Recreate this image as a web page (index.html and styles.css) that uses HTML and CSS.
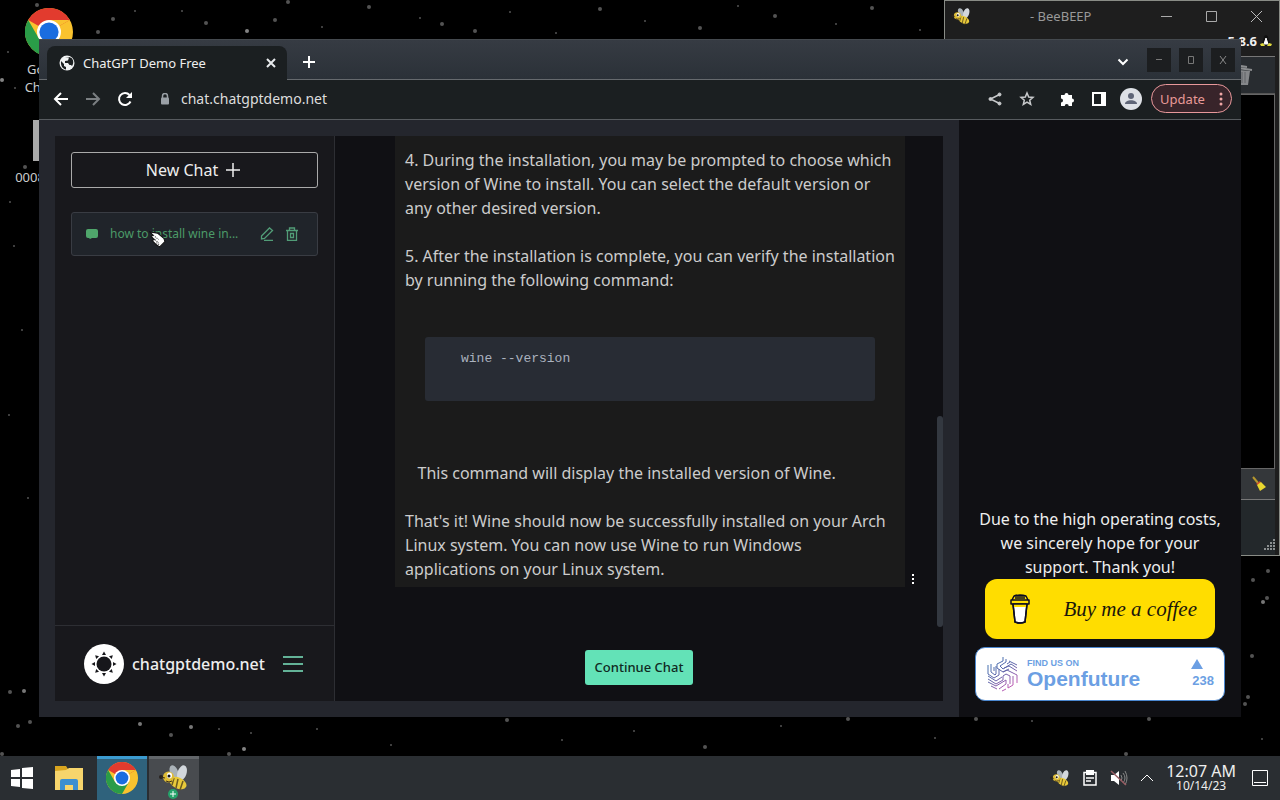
FILE: index.html
```html
<!DOCTYPE html>
<html lang="en">
<head>
    <meta charset="UTF-8">
    <meta name="viewport" content="width=device-width, initial-scale=1.0">
    <title>ChatGPT Demo Free</title>
    <link rel="stylesheet" href="styles.css">
</head>
<body>
    <!-- shared icons -->
    <svg class="defs" width="0" height="0">
        <symbol id="chrome" viewBox="0 0 48 48">
            <circle cx="24" cy="24" r="24" fill="#f9c22e"/>
            <path d="M24 24 L3.2 12 A24 24 0 0 1 44.8 12 Z" fill="#e23b2e"/>
            <path d="M24 12 H44.8 L24 24 Z" fill="#f9c22e"/>
            <path d="M3.2 12 L13.6 30 L24 35 L34.4 30 L24 48 A24 24 0 0 1 3.2 12Z" fill="#2a9c48"/>
            <circle cx="24" cy="24" r="12" fill="#fff"/>
            <circle cx="24" cy="24" r="9.6" fill="#1a6de0"/>
        </symbol>
        <symbol id="bee" viewBox="0 0 30 26">
            <ellipse cx="15" cy="7" rx="4" ry="7" fill="#aab2b8" transform="rotate(-22 15 7)"/>
            <ellipse cx="23" cy="8" rx="4.5" ry="8" fill="#d2d7dc" transform="rotate(18 23 8)"/>
            <ellipse cx="19" cy="18" rx="9" ry="5.5" fill="#e8c93a" transform="rotate(25 19 18)"/>
            <path d="M15 13l-2 7M19 14l-2 9M24 16l-3 9" stroke="#6b5a20" stroke-width="1.500"/>
            <circle cx="9.500" cy="12" r="5.500" fill="#dfbd35"/>
            <ellipse cx="10.500" cy="10.500" rx="2.500" ry="3" fill="#fff"/>
            <circle cx="10" cy="11" r="1.500" fill="#171717"/>
            <circle cx="2" cy="12" r="2" fill="#28231e"/>
            <path d="M2 12l4 1M7 16q3 2 6 0" stroke="#3b2d19" fill="none"/>
        </symbol>
    </svg>

    <main class="desktop">
        <svg class="stars" width="100%" height="100%" fill="#777">
            <circle cx="37" cy="5" r="2"/><circle cx="113" cy="19" r="2"/><circle cx="98" cy="32" r="2"/>
            <circle cx="135" cy="11" r="1"/><circle cx="182" cy="11" r="1"/><circle cx="206" cy="23" r="2"/>
            <circle cx="247" cy="31" r="2" fill="#bbb"/><circle cx="275" cy="20" r="2"/><circle cx="288" cy="2" r="2"/>
            <circle cx="369" cy="7" r="2"/><circle cx="322" cy="27" r="1"/><circle cx="420" cy="18" r="1"/>
            <circle cx="442" cy="24" r="2"/><circle cx="475" cy="31" r="2"/><circle cx="510" cy="12" r="1"/>
            <circle cx="556" cy="33" r="1"/><circle cx="600" cy="9" r="2"/><circle cx="645" cy="21" r="1"/>
            <circle cx="700" cy="28" r="2"/><circle cx="738" cy="6" r="1"/><circle cx="775" cy="16" r="2"/>
            <circle cx="836" cy="24" r="1"/><circle cx="872" cy="8" r="2"/><circle cx="920" cy="30" r="1"/>
            <circle cx="2" cy="80" r="2" fill="#bbb"/><circle cx="8" cy="52" r="1"/><circle cx="15" cy="88" r="1"/>
            <circle cx="25" cy="167" r="2"/><circle cx="10" cy="202" r="1"/><circle cx="14" cy="246" r="1"/>
            <circle cx="22" cy="330" r="1"/><circle cx="9" cy="415" r="1"/><circle cx="28" cy="498" r="1"/>
            <circle cx="10" cy="692" r="2"/><circle cx="24" cy="691" r="2" fill="#aaa"/><circle cx="30" cy="722" r="2"/>
            <circle cx="18" cy="726" r="2"/><circle cx="2" cy="754" r="2"/><circle cx="140" cy="724" r="2" fill="#aaa"/>
            <circle cx="171" cy="735" r="2"/><circle cx="191" cy="727" r="2" fill="#aaa"/><circle cx="219" cy="729" r="1"/>
            <circle cx="244" cy="749" r="2" fill="#bbb"/><circle cx="229" cy="754" r="2"/><circle cx="251" cy="733" r="1"/>
            <circle cx="317" cy="729" r="1"/><circle cx="391" cy="745" r="1"/><circle cx="507" cy="720" r="2"/>
            <circle cx="562" cy="740" r="1"/><circle cx="634" cy="731" r="1"/><circle cx="705" cy="747" r="2"/>
            <circle cx="781" cy="726" r="1"/><circle cx="848" cy="719" r="2"/><circle cx="935" cy="738" r="1"/>
            <circle cx="976" cy="719" r="2"/><circle cx="1032" cy="721" r="1"/><circle cx="1149" cy="719" r="2"/>
            <circle cx="1126" cy="754" r="2"/><circle cx="1253" cy="580" r="2"/><circle cx="1268" cy="571" r="2"/>
            <circle cx="1263" cy="602" r="2" fill="#aaa"/><circle cx="1267" cy="598" r="2"/><circle cx="1252" cy="656" r="2"/>
            <circle cx="1248" cy="697" r="2"/><circle cx="1245" cy="704" r="2"/><circle cx="1262" cy="739" r="1"/>
        </svg>

        <a href="#" class="shortcut shortcut-chrome">
            <svg width="48" height="48"><use href="#chrome"/></svg>
            <span>Google<br>Chrome</span>
        </a>
        <a href="#" class="shortcut shortcut-file">
            <span class="thumb"></span>
            <span>0008</span>
        </a>

        <!-- BeeBEEP window, behind the browser -->
        <section class="beebeep">
            <header class="bee-title">
                <svg width="20" height="17"><use href="#bee"/></svg>
                <span class="bee-name">- BeeBEEP</span>
                <button aria-label="Minimize"><svg width="13" height="13" stroke="#aaa"><path d="M1 6.500h11"/></svg></button>
                <button aria-label="Maximize"><svg width="13" height="13" fill="none" stroke="#aaa"><path d="M1.500 1.500h10v10h-10z"/></svg></button>
                <button aria-label="Close"><svg width="13" height="13" stroke="#bbb"><path d="M1 1l11 11M12 1L1 12"/></svg></button>
            </header>
            <div class="bee-version">
                <strong>5.8.6</strong>
                <svg width="12" height="12" viewBox="0 0 12 12">
                    <path d="M6 0c-3 1-2 4-4 8l1 3h6l1-3C8 4 9 1 6 0z" fill="#111"/>
                    <path d="M6 3l-2 6h4z" fill="#fff" stroke="#fff"/>
                    <path d="M0 9l3-1 2 3H1zM12 9L9 8l-2 3h4z" fill="#dfd93c"/>
                </svg>
            </div>
            <div class="bee-tools">
                <svg width="16" height="22" viewBox="0 0 16 22">
                    <path d="M1 4l14 2M4 2l6 1" stroke="#8b8d8f" stroke-width="2"/>
                    <path d="M2 6l11 1-2 14H3z" fill="#85878a"/>
                    <path d="M5 8v11M8 8v11" stroke="#606366"/>
                </svg>
            </div>
            <div class="bee-body"></div>
            <div class="bee-clean">
                <svg width="16" height="16" viewBox="0 0 16 16">
                    <path d="M2 1l5 6" stroke="#b5972e" stroke-width="2"/>
                    <path d="M5 8l4-3 1 2-3 2z" fill="#d44a2b"/>
                    <path d="M6 9l4-3 5 5c-2 1-4 3-6 4z" fill="#e9d72f"/>
                </svg>
            </div>
            <div class="bee-input">
                <svg width="12" height="12" fill="#8b8f90">
                    <path d="M10 0h2v2h-2zM7 3h2v2H7zM10 3h2v2h-2zM4 6h2v2H4zM7 6h2v2H7zM10 6h2v2h-2zM1 9h2v2H1zM4 9h2v2H4zM7 9h2v2H7zM10 9h2v2h-2z"/>
                </svg>
            </div>
        </section>

        <!-- browser window -->
        <section class="browser">
            <div class="tabstrip">
                <div class="tab">
                    <svg width="16" height="16" viewBox="0 0 16 16">
                        <circle cx="8" cy="8" r="7.500" fill="#f1f3f4"/>
                        <path d="M2 6l3 3v2l2 1v2.500C3.500 14 1.500 10.500 2 6zM6 2.500h4l-1 3-3 .5v2H9l1.500 2H12l1 1c2-3 1.500-6-.5-8L10 2z" fill="#1b1f21"/>
                    </svg>
                    <span class="tab-title">ChatGPT Demo Free</span>
                    <button aria-label="Close tab"><svg width="10" height="10" stroke="#e8eaed" stroke-width="2"><path d="M1 1l8 8M9 1L1 9"/></svg></button>
                </div>
                <button class="new-tab" aria-label="New tab"><svg width="12" height="12" stroke="#fff" stroke-width="2"><path d="M6 0v12M0 6h12"/></svg></button>
                <button class="tab-search" aria-label="Search tabs"><svg width="12" height="8" fill="none" stroke="#fff" stroke-width="2"><path d="M1.500 1.500L6 6l4.500-4.500"/></svg></button>
                <div class="win-buttons">
                    <button aria-label="Minimize"><svg width="8" height="12" stroke="#777"><path d="M1 5.500h6"/></svg></button>
                    <button aria-label="Maximize"><svg width="8" height="12" fill="none" stroke="#777"><path d="M1.500 2.500h5v7h-5z"/></svg></button>
                    <button aria-label="Close"><svg width="8" height="12" stroke="#888"><path d="M1 2l6 8M7 2l-6 8"/></svg></button>
                </div>
            </div>

            <div class="toolbar">
                <button class="tool" aria-label="Back"><svg width="16" height="16" fill="none" stroke="#fff" stroke-width="2"><path d="M15 8H2M8 2L2 8l6 6"/></svg></button>
                <button class="tool" aria-label="Forward"><svg width="16" height="16" fill="none" stroke="#7b7f82" stroke-width="2"><path d="M1 8h13M8 2l6 6-6 6"/></svg></button>
                <button class="tool" aria-label="Reload"><svg width="16" height="16" viewBox="0 0 16 16"><path d="M13.500 10.500A6 6 0 1 1 12.500 4" fill="none" stroke="#fff" stroke-width="2"/><path d="M15 1v6H9z" fill="#fff"/></svg></button>
                <svg class="lock" width="10" height="12" viewBox="0 0 10 12"><path d="M2.500 5V3a2.500 2.500 0 0 1 5 0v2" fill="none" stroke="#9aa0a6" stroke-width="1.500"/><rect x="1" y="4.500" width="8" height="7" rx="1" fill="#9aa0a6"/></svg>
                <input class="address" type="text" aria-label="Address" value="chat.chatgptdemo.net">
                <button class="tool" aria-label="Share"><svg width="14" height="14" viewBox="0 0 14 14" fill="#c8cacc" stroke="#c8cacc"><path d="M11.500 2.500L2.500 7l9 4.500" fill="none" stroke-width="1.500"/><circle cx="11.500" cy="2.500" r="1.500"/><circle cx="2.500" cy="7" r="1.500"/><circle cx="11.500" cy="11.500" r="1.500"/></svg></button>
                <button class="tool" aria-label="Bookmark"><svg width="16" height="16" viewBox="0 0 16 16" fill="none" stroke="#c8cacc" stroke-width="1.500"><path d="M8 2l1.700 4 4.300.400-3.300 2.800 1 4.300L8 11.200l-3.700 2.300 1-4.300L2 6.400 6.300 6z"/></svg></button>
                <button class="tool tool-ext" aria-label="Extensions"><svg width="16" height="16" viewBox="0 0 16 16" fill="#fff"><path d="M2 4h3.500a2 2 0 1 1 4 0H13v3.500a2 2 0 1 1 0 4V15H9.700a2 2 0 0 0-4 0H2v-3.500a2 2 0 0 0 0-4z"/></svg></button>
                <button class="tool" aria-label="Side panel"><svg width="14" height="14"><path d="M0 0h14v14H0z" fill="#fff"/><path d="M2 2h7v10H2z" fill="#1b1f21"/></svg></button>
                <button class="tool" aria-label="Profile"><svg width="22" height="22" viewBox="0 0 22 22"><circle cx="11" cy="11" r="11" fill="#dee1e6"/><circle cx="11" cy="8" r="3" fill="#5f6577"/><path d="M5 16c0-5 12-5 12 0z" fill="#5f6577"/></svg></button>
                <button class="update">Update <svg width="4" height="14" fill="#f0a6a5"><circle cx="2" cy="2" r="1.500"/><circle cx="2" cy="7" r="1.500"/><circle cx="2" cy="12" r="1.500"/></svg></button>
            </div>

            <div class="page">
                <div class="app">
                    <aside class="sidebar">
                        <button class="new-chat">New Chat <svg width="14" height="14" stroke="#eee" stroke-width="1.500"><path d="M7 0v14M0 7h14"/></svg></button>
                        <div class="history">
                            <svg width="14" height="12" viewBox="0 0 14 12" fill="#4fa66b"><path d="M3 1h8q2 0 2 2v5q0 2-2 2H7l-2 1-1-1H3q-2 0-2-2V3q0-2 2-2z"/></svg>
                            <a href="#" class="history-link">how to install wine in...</a>
                            <button aria-label="Rename"><svg width="14" height="14" viewBox="0 0 14 14" fill="none" stroke="#519c77" stroke-width="1.300"><path d="M1.500 9L9.500 1l3 2.500-8 8-3 .5zM4 13.500h9"/></svg></button>
                            <button aria-label="Delete"><svg width="14" height="14" viewBox="0 0 14 14" fill="none" stroke="#519c77" stroke-width="1.300"><path d="M1 3.500h12M4.500 3V1h5v2M2.500 4v9.300h9V4M5.500 6.500h3v4h-3z"/></svg></button>
                            <svg class="cursor" width="17" height="17" viewBox="0 0 16 16"><path d="M1 1l7 1 6 5 1 3-5 5-3-2-4-4 2-1-3-3 2-1z" fill="#fff" stroke="#111"/><path d="M4 4l5 4M4 7l5 4M7 11l3 2" stroke="#333" stroke-dasharray="1 1"/></svg>
                        </div>
                        <footer class="account">
                            <svg width="40" height="40" viewBox="0 0 40 40">
                                <circle cx="20" cy="20" r="20" fill="#fff"/>
                                <circle cx="20" cy="20" r="7.500" fill="#17171b"/>
                                <path id="ray" d="M18 11l2-3.500 2 3.500z" fill="#17171b"/>
                                <use href="#ray" transform="rotate(45 20 20)"/><use href="#ray" transform="rotate(90 20 20)"/>
                                <use href="#ray" transform="rotate(135 20 20)"/><use href="#ray" transform="rotate(180 20 20)"/>
                                <use href="#ray" transform="rotate(225 20 20)"/><use href="#ray" transform="rotate(270 20 20)"/>
                                <use href="#ray" transform="rotate(315 20 20)"/>
                            </svg>
                            <span>chatgptdemo.net</span>
                            <button aria-label="Menu"><svg width="20" height="16" stroke="#63b297" stroke-width="2"><path d="M0 1h20M0 8h20M0 15h20"/></svg></button>
                        </footer>
                    </aside>

                    <div class="chat">
                        <div class="message-row">
                            <article class="message">
                                <p>4. During the installation, you may be prompted to choose which version of Wine to install. You can select the default version or any other desired version.</p>
                                <p>5. After the installation is complete, you can verify the installation by running the following command:</p>
                                <pre><code>wine --version</code></pre>
                                <p>&nbsp;&nbsp;&nbsp;This command will display the installed version of Wine.</p>
                                <p>That's it! Wine should now be successfully installed on your Arch Linux system. You can now use Wine to run Windows applications on your Linux system.</p>
                            </article>
                            <button class="message-menu" aria-label="Message menu"><svg width="4" height="12" fill="#fff"><path d="M1 1h2v2H1zM1 5h2v2H1zM1 9h2v2H1z"/></svg></button>
                        </div>
                        <button class="continue">Continue Chat</button>
                        <div class="scroll-thumb"></div>
                    </div>
                </div>

                <aside class="support">
                    <p>Due to the high operating costs, we sincerely hope for your support. Thank you!</p>
                    <a href="#" class="coffee">
                        <svg width="22" height="30" viewBox="0 0 22 30" stroke="#0d0c22" stroke-width="1.500" stroke-linejoin="round">
                            <path d="M4 10l2 18q5 2 10 0l2-18z" fill="#fff"/>
                            <path d="M4 10h14l-.3 3H4.300z" fill="#ffdd00" stroke="none"/>
                            <path d="M4 10l2 18q5 2 10 0l2-18M2 6h18v4H2zM3 6l2-4h12l2 4M5 2q6-2 12 0M6 4h10" fill="none"/>
                        </svg>
                        <span>Buy me a coffee</span>
                    </a>
                    <a href="#" class="openfuture">
                        <svg width="34" height="36" viewBox="0 0 34 36" fill="none" stroke="url(#of)">
                            <defs>
                                <linearGradient id="of" gradientUnits="userSpaceOnUse" x1="4" y1="2" x2="28" y2="34">
                                    <stop offset="0" stop-color="#3c78b4"/><stop offset=".5" stop-color="#6263a8"/><stop offset="1" stop-color="#d95bb8"/>
                                </linearGradient>
                            </defs>
                            <path d="M17 1v4l-6 3v4l6 4 6-3M20 3v3l-6 4 3 3 8-5 6 4M23 5l8 4M21 8l3-2M2 9v9l6 4 5-3v-6M5 8v8l4 3 1-1v-8M8 11v4M2 20l8 5 6-4M2 23l8 5 7-4v-4l3-2 4 2v8M2 26l8 4 10-6v4l-7 5M5 30l6 3M17 16l4-2 10 5v8M18 12l5-2 8 5M27 20v9l-5 3v-4M16 35l4-2"/>
                        </svg>
                        <span class="of-text"><small>FIND US ON</small><strong>Openfuture</strong></span>
                        <span class="of-votes"><svg width="12" height="10" fill="#6c9fe3"><path d="M6 0l6 10H0z"/></svg>238</span>
                    </a>
                </aside>
            </div>
        </section>
    </main>

    <footer class="taskbar">
        <button class="task" aria-label="Start"><svg width="22" height="22" fill="#fff"><path d="M0 3l9-1v8H0zM11 1l11-1v10H11zM0 12h9v8l-9-1zM11 12h11v10l-11-1z"/></svg></button>
        <button class="task" aria-label="Files"><svg width="28" height="24" viewBox="0 0 28 24"><path d="M0 0h11l2 3v6H0z" fill="#d9a51f"/><path d="M0 5l11-1 3-2h14v22H0z" fill="#f7d56c"/><path d="M5 24V15q0-2 2-2h14q2 0 2 2v9h-5v-5h-8v5z" fill="#3c8fd0"/></svg></button>
        <button class="task task-active" aria-label="Chrome"><svg width="32" height="32"><use href="#chrome"/></svg></button>
        <button class="task task-open" aria-label="BeeBEEP"><svg width="30" height="26"><use href="#bee"/></svg>
            <svg class="badge" width="10" height="10" stroke="#fff"><circle cx="5" cy="5" r="5" fill="#25a36a" stroke="none"/><path d="M5 2v6M2 5h6"/></svg></button>
        <div class="tray">
            <svg width="20" height="17"><use href="#bee"/></svg>
            <svg width="14" height="16" viewBox="0 0 14 16" fill="none" stroke="#fff" stroke-width="1.500"><path d="M1 2.500h12v12.500H1zM3 8h8M3 11h5"/><path d="M3 0h8v5H3z" fill="#fff" stroke="none"/></svg>
            <svg width="18" height="16" viewBox="0 0 18 16" fill="none"><path d="M1 5h3l5-4v14l-5-4H1z" fill="#fff"/><path d="M11 5q2 3 0 6M13 3q4 5 0 10M15 1q4 7 0 14" stroke="#888"/><path d="M1 1l15 14" stroke="#985c62" stroke-width="1.500"/></svg>
            <svg width="12" height="8" fill="none" stroke="#fff"><path d="M0 7l6-6 6 6"/></svg>
            <div class="clock"><span>12:07 AM</span><small>10/14/23</small></div>
            <svg width="16" height="16" fill="none" stroke="#fff"><path d="M.5.5h15v15H.5zM2 12.500h12"/></svg>
        </div>
    </footer>
</body>
</html>
```
FILE: styles.css
```css
* {
    box-sizing: border-box;
}
body {
    margin: 0;
    height: 100vh;
    display: flex;
    flex-direction: column;
    background-color: #000;
    color: #eee;
    font-family: "Noto Sans", sans-serif;
    font-size: 13px;
    overflow: hidden;
}
button {
    display: flex;
    align-items: center;
    justify-content: center;
    padding: 0;
    border: none;
    background: none;
    color: inherit;
    font: inherit;
    cursor: pointer;
}
a {
    color: inherit;
    text-decoration: none;
}
p {
    margin: 0;
}
svg {
    display: block;
    flex-shrink: 0;
}
.defs {
    position: absolute;
}

/* desktop */
.desktop {
    flex: 1;
    position: relative;
    overflow: hidden;
}
.stars {
    position: absolute;
    inset: 0;
    opacity: 0.7;
}
.shortcut {
    position: absolute;
    left: 9px;
    width: 80px;
    display: flex;
    flex-direction: column;
    align-items: center;
    gap: 4px;
    text-align: center;
    line-height: 18px;
    color: #ccc;
}
.shortcut-chrome {
    top: 8px;
}
.shortcut-file {
    top: 120px;
    left: 0;
    width: 60px;
    gap: 7px;
}
.thumb {
    width: 32px;
    height: 41px;
    margin-left: 38px;
    background-color: #aaa;
}

/* BeeBEEP */
.beebeep {
    position: absolute;
    top: 0;
    right: 0;
    width: 336px;
    height: 556px;
    display: flex;
    flex-direction: column;
    padding-right: 4px;
    border: 1px solid #898c86;
    background-color: #1e1e1e;
}
.bee-title {
    height: 30px;
    display: flex;
    align-items: center;
    gap: 32px;
    padding: 0 12px 0 6px;
    color: #999;
}
.bee-name {
    flex: 1;
    padding-left: 27px;
}
.bee-version {
    height: 25px;
    display: flex;
    align-items: center;
    justify-content: flex-end;
    gap: 3px;
    padding-right: 3px;
    padding-bottom: 5px;
}
.bee-tools {
    height: 38px;
    display: flex;
    align-items: center;
    justify-content: flex-end;
    padding-right: 22px;
    border-top: 1px solid #777;
    border-bottom: 1px solid #555;
    background-color: #282c30;
}
.bee-body {
    flex: 1;
    border: 1px solid #666;
    background-color: #000;
}
.bee-clean {
    height: 31px;
    display: flex;
    align-items: center;
    justify-content: flex-end;
    padding-right: 8px;
    border-bottom: 1px solid #777;
    background-color: #34373a;
}
.bee-input {
    height: 55px;
    display: flex;
    align-items: flex-end;
    justify-content: flex-end;
    padding-bottom: 4px;
    background-color: #23282b;
}

/* browser */
.browser {
    position: absolute;
    inset: 39px 39px;
    display: flex;
    flex-direction: column;
    background-color: #1b1f21;
}
.tabstrip {
    height: 41px;
    display: flex;
    align-items: center;
    padding: 0 6px 0 8px;
    border-top: 1px solid #44494e;
    border-bottom: 1px solid #666a6e;
    background: linear-gradient(#363b43, #2b3138);
}
.tab {
    width: 240px;
    height: 34px;
    align-self: flex-end;
    display: flex;
    align-items: center;
    gap: 8px;
    padding: 0 11px 0 12px;
    margin-bottom: -1px;
    border-radius: 8px 8px 0 0;
    background-color: #1b1f21;
}
.tab-title {
    flex: 1;
}
.new-tab,
.tab-search {
    width: 24px;
    height: 24px;
    margin-top: 5px;
}
.new-tab {
    margin-left: 10px;
}
.tab-search {
    margin-left: auto;
}
.win-buttons {
    display: flex;
    gap: 8px;
    margin-left: 12px;
}
.win-buttons button {
    width: 24px;
    height: 24px;
    background-color: #1c1e20;
}
.toolbar {
    height: 40px;
    display: flex;
    align-items: center;
    gap: 8px;
    padding: 0 9px 2px 10px;
    border-bottom: 1px solid #575b5f;
}
.tool {
    width: 24px;
    height: 24px;
}
.tool-ext {
    margin-left: 8px;
}
.lock {
    margin-left: 15px;
}
.address {
    flex: 1;
    min-width: 0;
    margin-left: 3px;
    padding: 0;
    border: none;
    outline: none;
    background: none;
    color: #ddd;
    font-family: inherit;
    font-size: 14px;
}
.update {
    height: 29px;
    width: 81px;
    gap: 14px;
    border: 1px solid #e8989b;
    border-radius: 15px;
    background-color: #38242a;
    color: #e89a98;
}

/* page */
.page {
    flex: 1;
    min-height: 0;
    display: flex;
    background-color: #24262d;
}
.app {
    flex: 1;
    min-width: 0;
    display: flex;
    margin: 16px;
    background-color: #101014;
}
.sidebar {
    width: 280px;
    display: flex;
    flex-direction: column;
    padding-top: 16px;
    border-right: 1px solid #2d2e33;
    background-color: #18181c;
}
.new-chat {
    height: 36px;
    margin: 0 16px 24px;
    padding-right: 3px;
    gap: 8px;
    border: 1px solid #aaa;
    border-radius: 3px;
    font-size: 16px;
}
.history {
    position: relative;
    height: 44px;
    display: flex;
    align-items: center;
    gap: 11px;
    margin: 0 16px;
    padding: 0 18px 0 13px;
    border: 1px solid #393c43;
    border-radius: 3px;
    background-color: #20242a;
    color: #4c9a68;
}
.history-link {
    flex: 1;
    padding-bottom: 1px;
    font-size: 12px;
    white-space: nowrap;
}
.cursor {
    position: absolute;
    left: 77px;
    top: 18px;
}
.account {
    height: 76px;
    display: flex;
    align-items: center;
    gap: 8px;
    margin-top: auto;
    padding: 0 31px 0 29px;
    border-top: 1px solid #2d2e33;
    font-size: 16px;
    font-weight: 500;
}
.account button {
    margin-left: auto;
}
.chat {
    position: relative;
    flex: 1;
    min-width: 0;
    display: flex;
    flex-direction: column;
    align-items: center;
    overflow: hidden;
}
.message-row {
    align-self: stretch;
    display: flex;
    align-items: flex-end;
    padding: 0 28px 0 60px;
    margin-bottom: 63px;
}
.message {
    flex: 1;
    padding: 12px 9px 6px 10px;
    background-color: #1b1b1b;
    color: #ccc;
    font-size: 16px;
    line-height: 24px;
}
.message p + p {
    margin-top: 24px;
}
.message pre {
    height: 64px;
    margin: 45px 21px 60px 20px;
    padding: 10px 36px;
    border-radius: 3px;
    background-color: #282c34;
    color: #abb2bf;
    line-height: 20px;
}
.message code {
    font-family: "Liberation Mono", monospace;
    font-size: 13px;
}
.message-menu {
    width: 10px;
    height: 16px;
    margin-left: 3px;
    margin-right: -3px;
}
.continue {
    width: 108px;
    height: 35px;
    padding-bottom: 2px;
    border-radius: 3px;
    background-color: #63e2b7;
    color: #10291f;
    font-weight: 500;
}
.scroll-thumb {
    position: absolute;
    top: 280px;
    right: 0;
    width: 6px;
    height: 211px;
    border-radius: 3px;
    background-color: #333840;
}

/* support column */
.support {
    width: 282px;
    display: flex;
    flex-direction: column;
    align-items: center;
    justify-content: flex-end;
    padding: 0 16px 16px;
    background-color: #101014;
    font-size: 16px;
    line-height: 24px;
    text-align: center;
}
.coffee {
    width: 230px;
    height: 60px;
    display: flex;
    align-items: center;
    justify-content: space-between;
    margin-bottom: 8px;
    padding: 0 18px 0 24px;
    border-radius: 12px;
    background-color: #ffdd00;
    color: #1a160b;
    font-family: "Liberation Serif", serif;
    font-size: 21px;
    font-style: italic;
}
.openfuture {
    width: 250px;
    height: 54px;
    display: flex;
    align-items: center;
    padding: 0 10px;
    border: 1px solid #4b87cf;
    border-radius: 10px;
    background-color: #fff;
    color: #6c9fe3;
    font-family: "Liberation Sans", sans-serif;
    font-weight: bold;
    text-align: left;
}
.of-text {
    flex: 1;
    display: flex;
    flex-direction: column;
    padding-left: 7px;
}
.of-text small {
    font-size: 9px;
    line-height: 10px;
}
.of-text strong {
    font-size: 21px;
    line-height: 22px;
}
.of-votes {
    display: flex;
    flex-direction: column;
    gap: 4px;
    font-size: 13px;
    line-height: 16px;
}
.of-votes svg {
    margin-left: -1px;
}

/* taskbar */
.taskbar {
    height: 44px;
    display: flex;
    align-items: center;
    background-color: #2a2e32;
}
.task {
    position: relative;
    width: 50px;
    height: 44px;
}
.task:first-child {
    width: 44px;
}
.task-active {
    margin: 0 2px 0 3px;
    background-color: #2f627c;
    box-shadow: inset 0 3px #3b9bd0;
}
.task-open {
    background-color: #484b4f;
    box-shadow: inset 0 3px #62666a;
}
.badge {
    position: absolute;
    left: 19px;
    bottom: 1px;
}
.tray {
    display: flex;
    align-items: center;
    gap: 13px;
    margin-left: auto;
    padding-right: 12px;
}
.clock {
    display: flex;
    flex-direction: column;
    align-items: center;
    padding-right: 3px;
    font-size: 16px;
    line-height: 16px;
}
.clock small {
    font-size: 12px;
    line-height: 14px;
}
```
